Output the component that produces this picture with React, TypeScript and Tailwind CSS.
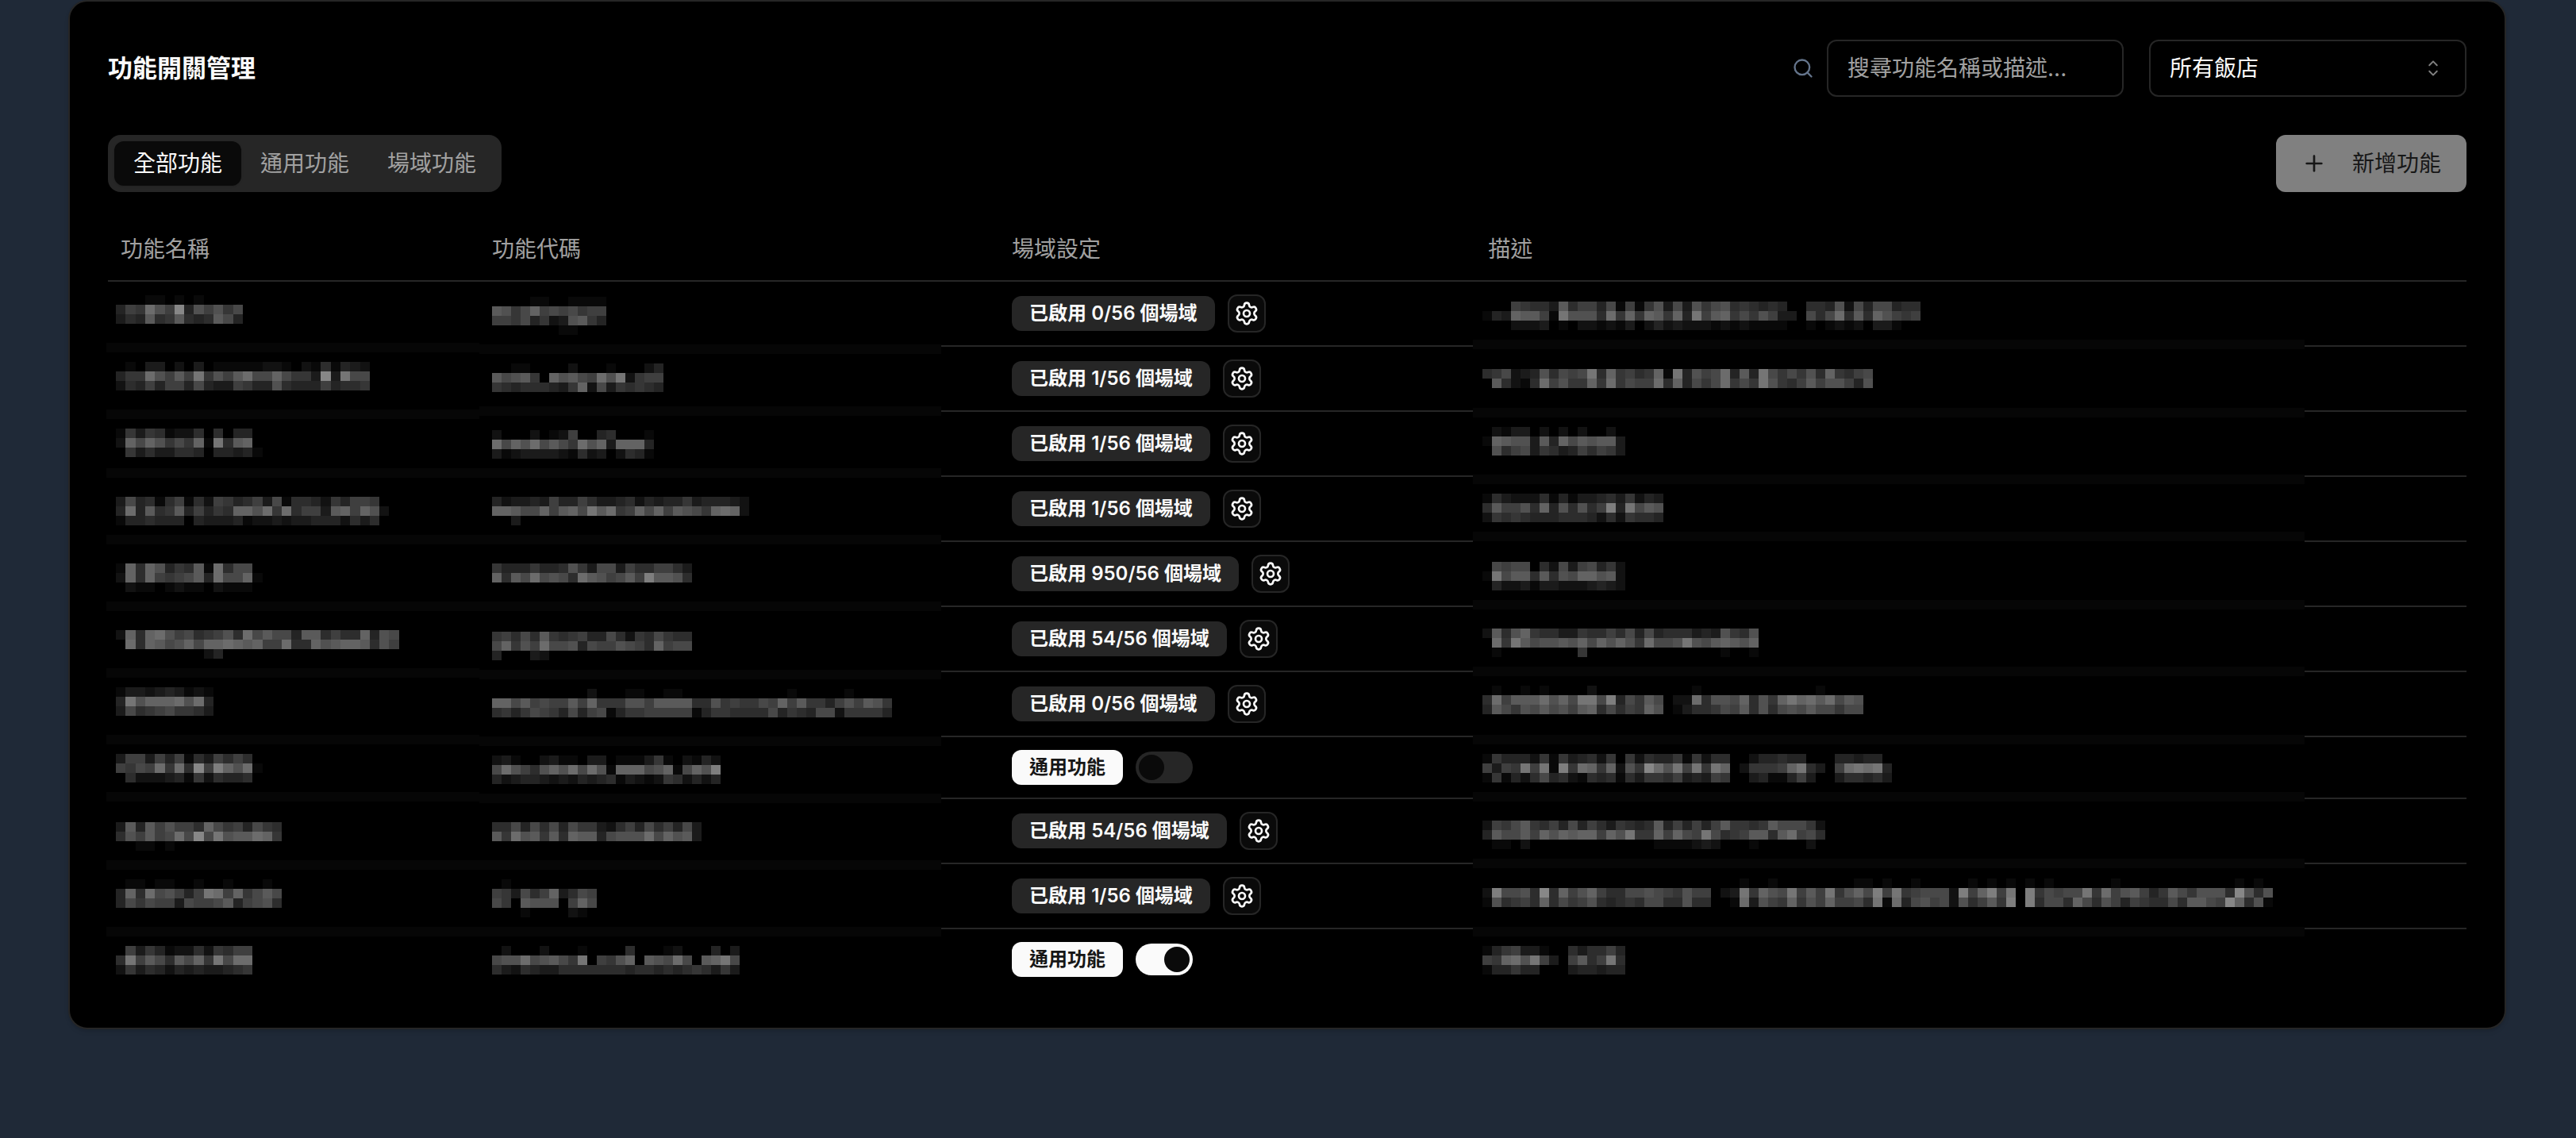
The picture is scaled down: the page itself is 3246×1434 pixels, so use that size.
import { useState } from "react";
import { Plus, Search, Settings } from "lucide-react";
import { RxCaretSort } from "react-icons/rx";

type Mosaic = { top: number; rows: string[]; band?: number };

type Feature = {
  name: Mosaic;
  code: Mosaic;
  description: Mosaic;
  enabled?: string;
  general?: boolean;
};

const features: Feature[] = [
  {
    enabled: "0/56",
    name: { top: 17, band: 77, rows: ["0001101010000", "476c97f497968", "354a56a545a84"] },
    code: { top: 19, band: 79, rows: ["000011001111", "a968b7878677", "776846239a64", "000000011000"] },
    description: {
      top: 25,
      band: 73,
      rows: [
        "00076553a5774817169383968956545400554928488455",
        "143baa71d9995c6b6ba6b4d7ab68697330858c5a5b9767",
        "0002223010221213024232221212111100101212033100",
      ],
    },
  },
  {
    enabled: "1/56",
    name: {
      top: 19,
      band: 79,
      rows: ["01033020301111122102151432", "466c97a7d697ac88b8663f3d88", "25474774843376449544474556"],
    },
    code: { top: 21, band: 75, rows: ["001100002000100024", "a89a60b9a87c9d2677", "654555436b28365654"] },
    description: {
      top: 28,
      band: 77,
      rows: ["56823495878d5b6756b1d4978c4a4d868695b6578", "0a5215c7966b6c6877c5b4868c686d9657a799749"],
    },
  },
  {
    enabled: "1/56",
    name: { top: 21, band: 71, rows: ["163651225050440", "2b8b9686b1d5ab0", "063533554044341"] },
    code: { top: 23, band: 71, rows: ["20002012700450001", "c8b9c8a86c9b3bbb4", "31233332152302541"] },
    description: { top: 19, band: 79, rows: ["021330202020020", "1ba993a4b8a9aa3", "095783653475763"] },
  },
  {
    enabled: "1/56",
    name: {
      top: 25,
      band: 73,
      rows: ["3845157152764573815542647760", "4c4a56a47465bb9c6c5773ab7b92", "1445444043334122323344425350"],
    },
    code: {
      top: 25,
      band: 73,
      rows: ["423343744753345243446344432", "bba88b7ab8dac67b8b7a986bcb2", "003000000000000000000000000"],
    },
    description: {
      top: 21,
      band: 69,
      rows: ["1532225141334536243", "5a7795b495957e4d8a9", "2656544455542526554"],
    },
  },
  {
    enabled: "950/56",
    name: { top: 27, band: 75, rows: ["1b5b9465a1c5880", "2b5b7678a4c88b1", "021101211021110"] },
    code: { top: 27, band: 75, rows: ["644464459638837557753", "b5a8c8985ca978a7eaa95"] },
    description: { top: 25, band: 73, rows: ["087880528378462", "1d8aa5a598bb9a2", "042231332223432"] },
  },
  {
    enabled: "54/56",
    name: {
      top: 29,
      band: 77,
      rows: ["2b5bc97856795c8a884aa5755b498", "0c5ba89b8bbcbab77c55b9abba597", "00000000024"],
    },
    code: { top: 31, band: 79, rows: ["67585a656744852658655", "8b697c88948779875b788", "400032"] },
    description: {
      top: 27,
      band: 75,
      rows: ["2a59b655336557584845553439659", "0c6da899a9b8b9b96c889d98aba9b", "01000000006000000000000001001"],
    },
  },
  {
    enabled: "0/56",
    name: { top: 19, band: 79, rows: ["1332343121", "4d9bbbc9c4", "3856786653"] },
    code: {
      top: 21,
      band: 81,
      rows: [
        "000000000020001100110000000000010000010000",
        "bb8a7877a7b666997aaaa559676687b7a664797a96",
        "564687648478146677777146655558465488266664",
      ],
    },
    description: {
      top: 17,
      band: 79,
      rows: [
        "0100101000020000000000100000000000010000",
        "5c7aaac9b8dd8e486a8022c5998b596bdbcac8a9",
        "4a8698a897ab58576b901355687a595898a88688",
      ],
    },
  },
  {
    general: false,
    name: { top: 21, band: 69, rows: ["377374715375750", "7687c6c5f7eb9c1", "052223416254450"] },
    code: {
      top: 23,
      band: 71,
      rows: ["231002311033011136102142", "8c9759b9c8c91bbb89b18b9e", "423443232434513212652424"],
    },
    description: {
      top: 21,
      band: 69,
      rows: [
        "1644426163452606254461625500244544000443440",
        "7376d7d1e6cb6b296fc9d7d6db026667bd5307cdcd4",
        "1614258452154515366573437600341147300355453",
      ],
    },
  },
  {
    enabled: "54/56",
    name: { top: 29, band: 77, rows: ["3a4a79775b8674865", "597a78c8f8d9aacb6", "00110100000000000"] },
    code: { top: 29, band: 77, rows: ["5584858486632574857483", "a6c9a6a5baa48999c8b9a3"] },
    description: {
      top: 27,
      band: 75,
      rows: [
        "2768a6574847536545a474747a6656a88862",
        "4a88a7b9babb7b9d66b7b87d8567aa5ac785",
        "011020000000000000111123200010000020",
      ],
    },
  },
  {
    enabled: "1/56",
    name: { top: 19, band: 79, rows: ["01101100100100010", "4b5c89747dc7b68a8", "48687738778a47895"] },
    code: { top: 19, band: 79, rows: ["01000000000", "763857b3587", "860a99907b8", "00010000210"] },
    description: {
      top: 18,
      band: 79,
      rows: [
        "00000000000000000000000000010010000000011010010000010101010100000010000000000001010",
        "2e8895f5b79b755889876977023d6b98d7a7d69b8e7d678882e7be7d0e68788d6c79a746a869995f9590",
        "195675b58679545658855955001c3976b697b7785d1c489782957a6e0e5885b85974765585aa87fb591",
      ],
    },
  },
  {
    general: true,
    name: { top: 21, rows: ["07364122526577", "5d7a85a8b6d8cc", "26354243433456"] },
    code: {
      top: 21,
      rows: ["02000200010000500012000403", "899c89a86d0769b0a98c80abd8", "53254335555555455454565363"],
    },
    description: { top: 21, rows: ["146733100535574", "76bc9d7307a57d5", "144644000344344"] },
  },
];

/* Pixelated stand-in for private text: one hex digit per block, 0 = clear, f = lightest. */
function MosaicArt({ mosaic, pitch, inset }: { mosaic: Mosaic; pitch: number; inset: number }) {
  return (
    <svg className="relative block h-full w-full overflow-visible" aria-hidden="true">
      {mosaic.band !== undefined && (
        <rect x="0" y={mosaic.band} width="100%" height="12" fill="#060606" />
      )}
      {mosaic.rows.map((row, r) =>
        row.split("").map((digit, c) => {
          const level = parseInt(digit, 16) * 9;
          if (!level) return null;
          const x = Math.round(c * pitch);
          return (
            <rect
              key={`${r}-${c}`}
              x={x + inset}
              y={mosaic.top + r * 12}
              width={Math.round((c + 1) * pitch) - x}
              height="12"
              fill={`rgb(${level},${level},${level})`}
              shapeRendering="crispEdges"
            />
          );
        }),
      )}
    </svg>
  );
}

function SettingsCell({ feature }: { feature: Feature }) {
  const [on, setOn] = useState(Boolean(feature.general));
  if (feature.enabled) {
    return (
      <div className="flex items-center gap-4">
        <span className="flex h-11 items-center rounded-xl bg-[#262626] px-[22px] text-2xl font-semibold whitespace-nowrap text-neutral-50">
          已啟用 {feature.enabled} 個場域
        </span>
        <button
          type="button"
          aria-label="場域設定"
          className="flex size-12 items-center justify-center rounded-xl border-2 border-[#262626] bg-neutral-950 text-neutral-50"
        >
          <Settings className="size-8" />
        </button>
      </div>
    );
  }
  return (
    <div className="flex items-center gap-4">
      <span className="flex h-11 items-center rounded-xl bg-neutral-50 px-[22px] text-2xl font-semibold whitespace-nowrap text-neutral-900">
        通用功能
      </span>
      <label className="relative block h-10 w-18">
        <input
          type="checkbox"
          role="switch"
          aria-label="通用功能"
          checked={on}
          onChange={(e) => setOn(e.target.checked)}
          className="peer block h-10 w-18 appearance-none rounded-full bg-[#262626] checked:bg-neutral-50"
        />
        <span className="pointer-events-none absolute top-1 left-1 size-8 rounded-full bg-neutral-950 peer-checked:left-9" />
      </label>
    </div>
  );
}

const tabs = ["全部功能", "通用功能", "場域功能"];

export default function App() {
  const [tab, setTab] = useState(tabs[0]);
  return (
    <div className="min-h-screen bg-[#1f2937] pr-[88px] pl-[86px] font-['Inter','Noto_Sans_CJK_TC',sans-serif] text-[28px] leading-10 text-neutral-50">
      <main className="rounded-3xl border-2 border-[#262626] bg-black p-12 shadow-md">
        <header className="flex items-center justify-between">
          <h1 className="text-[31px] font-bold">功能開關管理</h1>
          <div className="flex items-center gap-8">
            <div className="flex items-center gap-4">
              <Search className="size-7 text-[#64748b]" />
              <input
                type="text"
                aria-label="搜尋功能"
                placeholder="搜尋功能名稱或描述..."
                className="h-18 w-[374px] rounded-xl border-2 border-[#262626] bg-transparent px-6 placeholder:text-neutral-400"
              />
            </div>
            <div className="relative">
              <select
                aria-label="飯店"
                className="block h-18 w-[400px] appearance-none rounded-xl border-2 border-[#262626] bg-black px-6"
              >
                <option>所有飯店</option>
              </select>
              <RxCaretSort className="pointer-events-none absolute top-5 right-[26px] size-8 text-[#808080]" />
            </div>
          </div>
        </header>

        <div className="mt-12 flex items-center justify-between">
          <div role="tablist" className="flex rounded-2xl bg-[#262626] p-2">
            {tabs.map((t) => (
              <button
                key={t}
                type="button"
                role="tab"
                aria-selected={t === tab}
                onClick={() => setTab(t)}
                className={
                  t === tab
                    ? "h-14 rounded-xl bg-neutral-950 px-6 text-neutral-50 shadow"
                    : "h-14 rounded-xl px-6 text-neutral-400"
                }
              >
                {t}
              </button>
            ))}
          </div>
          <button
            type="button"
            className="flex h-18 items-center gap-8 rounded-xl bg-[#808080] px-8 text-neutral-900"
          >
            <Plus className="size-8" />
            新增功能
          </button>
        </div>

        <table className="mt-8 w-full table-fixed border-separate border-spacing-0 text-left">
          <colgroup>
            <col className="w-[15.75%]" />
            <col className="w-[22.04%]" />
            <col className="w-[20.19%]" />
            <col />
          </colgroup>
          <thead>
            <tr className="text-neutral-400">
              {["功能名稱", "功能代碼", "場域設定", "描述"].map((h) => (
                <th key={h} className="h-[81px] border-b-2 border-[#262626] px-4 font-normal">
                  {h}
                </th>
              ))}
            </tr>
          </thead>
          <tbody>
            {features.map((f, i) => {
              const last = i === features.length - 1;
              const line = last ? "" : "border-b-2 border-[#262626]";
              const cover = last ? "hidden" : "absolute inset-x-0 bottom-0 h-0.5 bg-black";
              return (
                <tr key={i}>
                  <td className={`relative ${line}`}>
                    <div className="absolute inset-y-0 right-0 -left-0.5 -mb-0.5">
                      <div className={cover} />
                      <MosaicArt mosaic={f.name} pitch={12.3} inset={12} />
                    </div>
                  </td>
                  <td className={`relative ${line}`}>
                    <div className="absolute inset-y-0 right-[73px] left-0 -mb-0.5">
                      <div className={cover} />
                      <MosaicArt mosaic={f.code} pitch={12} inset={16} />
                    </div>
                  </td>
                  <td className={`p-4 ${line}`}>
                    <SettingsCell feature={f} />
                  </td>
                  <td className={`relative ${line}`}>
                    <div className="absolute inset-y-0 right-[204px] -left-[3px] -mb-0.5">
                      <div className={cover} />
                      <MosaicArt mosaic={f.description} pitch={12} inset={12} />
                    </div>
                  </td>
                </tr>
              );
            })}
          </tbody>
        </table>
      </main>
    </div>
  );
}
